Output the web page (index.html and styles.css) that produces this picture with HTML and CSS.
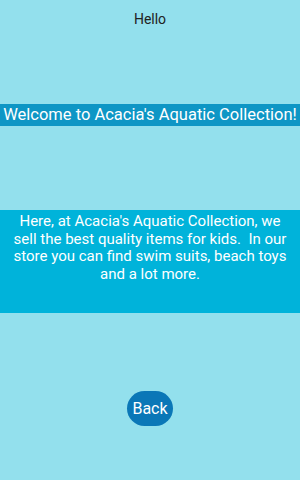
FILE: index.html
```html
<!DOCTYPE html>
<html lang="en">
<head>
    <meta charset="UTF-8">
    <meta name="viewport" content="width=device-width, initial-scale=1.0">
    <title>Acacia's Aquatic Collection</title>
    <link rel="stylesheet" href="styles.css">
</head>
<body>
    <div class="screen">
        <div class="hello">Hello</div>
        <div class="welcome">Welcome to Acacia's Aquatic Collection!</div>
        <div class="about">
            <p>Here, at Acacia's Aquatic Collection, we<br>sell the best quality items for kids. &nbsp;In our<br>store you can find swim suits, beach toys<br>and a lot more.</p>
        </div>
        <button class="back">Back</button>
    </div>
</body>
</html>
```

FILE: styles.css
```css
body {
    margin: 0;
    font-family: Roboto, "Noto Sans", sans-serif;
    background-color: #93e0ed;
}
.screen {
    height: 480px;
    display: flex;
    flex-direction: column;
    align-items: center;
}
.hello {
    margin-top: 11px;
    font-size: 14px;
    line-height: 17px;
    color: #222;
}
.welcome {
    margin-top: 76px;
    width: 100%;
    height: 22px;
    line-height: 22px;
    background-color: #0e96c5;
    color: #fff;
    font-size: 16.5px;
    text-align: center;
    white-space: nowrap;
}
.about {
    margin-top: 84px;
    width: 100%;
    height: 103px;
    background-color: #00b3da;
    color: #fff;
    text-align: center;
}
.about p {
    margin: 0;
    padding-top: 3px;
    font-size: 15px;
    line-height: 17.5px;
}
.back {
    margin-top: 78px;
    width: 46px;
    height: 35px;
    border: none;
    border-radius: 18px;
    background-color: #0a77b7;
    color: #fff;
    font-family: Roboto, sans-serif;
    font-size: 16px;
    padding: 0;
}
```
